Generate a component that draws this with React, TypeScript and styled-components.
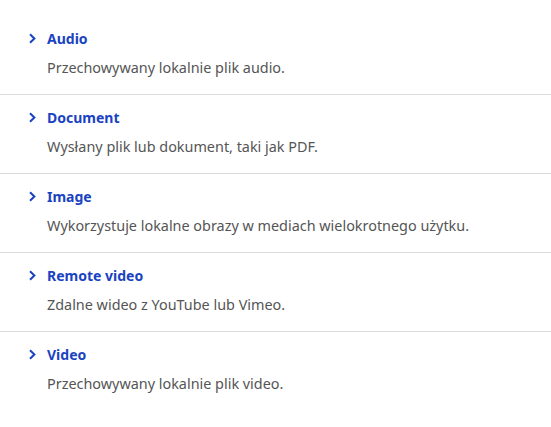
import React from "react";
import styled, { createGlobalStyle } from "styled-components";

const GlobalStyle = createGlobalStyle`
  body {
    margin: 0;
    background: #fff;
    font-family: "Noto Sans", "Open Sans", sans-serif;
  }
`;

const List = styled.ul`
  list-style: none;
  margin: 0;
  padding: 16px 0 0 0;
`;

const Row = styled.li`
  padding: 12px 0 16px 28px;
  border-bottom: 1px solid #dcdcdc;

  &:last-child {
    border-bottom: none;
  }
`;

const Header = styled.div`
  display: flex;
  align-items: center;
  height: 20px;
`;

const Chevron = styled.svg`
  width: 9px;
  height: 11px;
  margin-right: 10px;
  flex-shrink: 0;
`;

const Title = styled.a`
  font-size: 14px;
  font-weight: 700;
  color: #1a43c2;
  text-decoration: none;
`;

const Description = styled.p`
  margin: 10px 0 0 19px;
  font-size: 14.4px;
  line-height: 20px;
  color: #555;
`;

const items = [
  { title: "Audio", desc: "Przechowywany lokalnie plik audio." },
  { title: "Document", desc: "Wysłany plik lub dokument, taki jak PDF." },
  { title: "Image", desc: "Wykorzystuje lokalne obrazy w mediach wielokrotnego użytku." },
  { title: "Remote video", desc: "Zdalne wideo z YouTube lub Vimeo." },
  { title: "Video", desc: "Przechowywany lokalnie plik video." },
];

export default function App() {
  return (
    <>
      <GlobalStyle />
      <List>
        {items.map((item) => (
          <Row key={item.title}>
            <Header>
              <Chevron viewBox="0 0 9 11">
                <path d="M2 1.2 L6.4 5.5 L2 9.8" fill="none" stroke="#1a43c2" strokeWidth="2" />
              </Chevron>
              <Title href="#">{item.title}</Title>
            </Header>
            <Description>{item.desc}</Description>
          </Row>
        ))}
      </List>
    </>
  );
}
